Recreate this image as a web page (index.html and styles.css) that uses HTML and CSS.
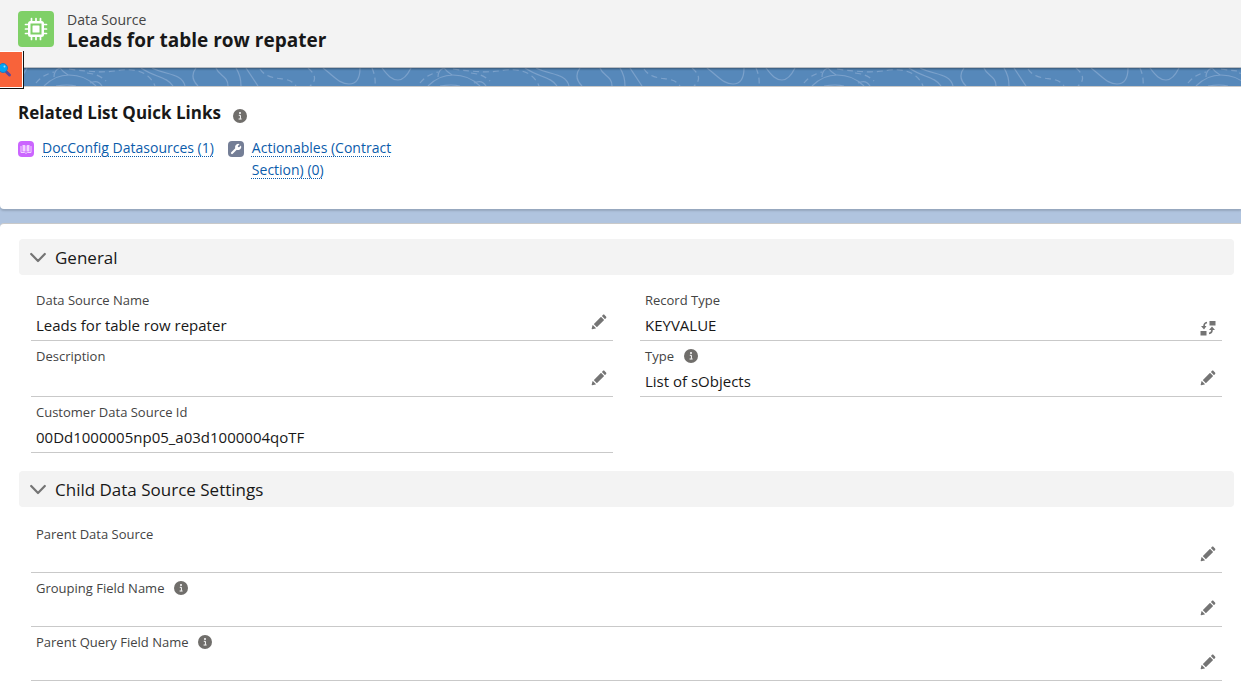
FILE: index.html
```
<!DOCTYPE html>
<html lang="en">
<head>
    <meta charset="UTF-8">
    <meta name="viewport" content="width=device-width, initial-scale=1.0">
    <title>Leads for table row repater | Data Source</title>
    <link rel="stylesheet" href="styles.css">
</head>
<body>
    <!-- Shared icons -->
    <svg class="sprite" aria-hidden="true">
        <symbol id="icon-info" viewBox="0 0 14 14">
            <circle cx="7" cy="7" r="7" fill="#706e6b"/>
            <circle cx="7" cy="4" r="1" fill="#fff"/>
            <path d="M5.8 6.3h1.6v3.500M5.600 10h3" fill="none" stroke="#fff" stroke-width="1"/>
        </symbol>
        <symbol id="icon-edit" viewBox="0 0 52 52">
            <path fill="#747474" d="M9.5 33.4l8.9 8.9c.4.4 1 .4 1.4 0L42 20c.4-.4.4-1 0-1.4l-8.8-8.8c-.4-.4-1-.4-1.4 0L9.5 32.1c-.4.4-.4 1 0 1.3zM36.1 5.7c-.4.4-.4 1 0 1.4l8.8 8.8c.4.4 1 .4 1.4 0l2.5-2.5c1.6-1.5 1.6-3.9 0-5.5l-4.7-4.7c-1.6-1.6-4.1-1.6-5.7 0l-2.3 2.5zM2.1 48.2c-.2 1 .7 1.9 1.7 1.7l10.9-2.6c.4-.1.7-.3.9-.5l.2-.2c.2-.2.3-.9-.1-1.3l-9-9c-.4-.4-1.1-.3-1.3-.1l-.2.2c-.3.3-.4.6-.5.9L2.1 48.2z"/>
        </symbol>
        <symbol id="icon-change" viewBox="0 0 16 16">
            <g fill="#747474">
                <rect x="9.5" y="1" width="6" height="4.5"/>
                <rect x=".5" y="11" width="6" height="4.5"/>
                <path d="M1 6h5.500L4 9.400zM9 10h6L12 6.600z"/>
            </g>
            <path d="M4 7V6q0-3 3-3.5M12 9v1q0 3-3 3.5" fill="none" stroke="#747474" stroke-width="1.6"/>
        </symbol>
        <symbol id="icon-chevron" viewBox="0 0 16 16">
            <path d="M1.2 5l6.8 7 6.8-7" fill="none" stroke="#747474" stroke-width="2.2" stroke-linecap="round" stroke-linejoin="round"/>
        </symbol>
    </svg>

    <header class="page-header">
        <svg class="record-icon" viewBox="0 0 36 36" aria-hidden="true">
            <rect x="10" y="10" width="16" height="16" rx="2.5" fill="#fff"/>
            <path d="M13.5 7.5v21M18 7.5v21M22.5 7.5v21M7.5 13.5h21M7.5 18h21M7.5 22.5h21" stroke="#fff" stroke-width="1.7" stroke-linecap="round"/>
            <rect x="12.5" y="12.5" width="11" height="11" fill="#7fd067"/>
            <rect x="14.5" y="14.5" width="7" height="7" rx=".6" fill="#fff"/>
        </svg>
        <div>
            <p class="record-type">Data Source</p>
            <h1>Leads for table row repater</h1>
        </div>
    </header>

    <button class="search-tab" type="button" aria-label="Search">
        <svg viewBox="0 0 14 16" aria-hidden="true">
            <path d="M6.5 10l3 3" stroke="#5b4a9c" stroke-width="3" stroke-linecap="round"/>
            <circle cx="3" cy="6" r="4.500" fill="#03a5f2" stroke="#2677c0" stroke-width="1"/>
            <circle cx="4.500" cy="4.500" r="1" fill="#9be0ff"/>
        </svg>
    </button>

    <!-- Contour line band -->
    <svg class="band" aria-hidden="true">
        <defs>
            <pattern id="contours" x="300" width="384" height="18" patternUnits="userSpaceOnUse">
                <g fill="none" stroke="#7ba1cb" stroke-width="1.2">
                    <path d="M23 0C36 10 40 16 49 16S60 8 60 0M82 0C88 8 92 12 98 12S108 6 111 0M128 18C136 10 144 7 153 7C166 7 174 12 180 18M174 15Q182 11 186 18M138 9Q138 2 144 0Q147 4 152 7M140 18Q152 16 160 18M225 0C240 10 250 8 257 18M236 0C250 7 266 5 269 18M280 0Q273 9 282 18M300 0C303 8 312 8 312 18M320 0Q325 8 325 18M330 0L342 18"/>
                    <path stroke-dasharray="6 4" d="M8 0Q20 10 10 18M72 0Q76 9 75 18M120 15Q126 7 138 4M153 1C175 4 190 5 205 2C225 0 235 8 239 18M171 5Q183 6 190 13M344 1C350 10 360 10 367 11S377 14 380 18"/>
                </g>
            </pattern>
        </defs>
        <rect width="100%" height="18" fill="url(#contours)"/>
    </svg>

    <main>
        <section class="card quick-links">
            <div class="card-title">
                <h2>Related List Quick Links</h2>
                <svg class="info"><use href="#icon-info"/></svg>
            </div>
            <ul class="link-list">
                <li>
                    <svg class="link-icon purple" viewBox="0 0 16 16" aria-hidden="true">
                        <path d="M3 5v6.5h3.5q1 0 1.5 1 .5-1 1.5-1H13V5" fill="none" stroke="#f2d5ff" stroke-width="1"/>
                        <path d="M4.5 4h2q1 0 1 1v5.5h-3zM8.5 5q0-1 1-1h2v6.5h-3z" fill="#f2d5ff"/>
                    </svg>
                    <a href="#">DocConfig Datasources (1)</a>
                </li>
                <li>
                    <svg class="link-icon slate" viewBox="0 0 16 16" aria-hidden="true">
                        <path d="M4 12l5-5" stroke="#fff" stroke-width="2.2" stroke-linecap="round"/>
                        <path d="M11.6 3.2L9.8 5l.2 1.1 1.100.2 1.800-1.800A3.100 3.100 0 1 1 11.600 3.200z" fill="#fff"/>
                    </svg>
                    <a href="#">Actionables (Contract Section) (0)</a>
                </li>
            </ul>
        </section>

        <section class="card details">
            <h3><button class="section-toggle" type="button" aria-expanded="true">
                <svg><use href="#icon-chevron"/></svg>General
            </button></h3>
            <div class="fields two-columns">
                <div class="field">
                    <div class="label">Data Source Name</div>
                    <div class="value">Leads for table row repater</div>
                    <button class="edit" type="button" aria-label="Edit Data Source Name"><svg><use href="#icon-edit"/></svg></button>
                </div>
                <div class="field">
                    <div class="label">Record Type</div>
                    <div class="value">KEYVALUE</div>
                    <button class="edit change" type="button" aria-label="Change Record Type"><svg><use href="#icon-change"/></svg></button>
                </div>
                <div class="field">
                    <div class="label">Description</div>
                    <div class="value"></div>
                    <button class="edit" type="button" aria-label="Edit Description"><svg><use href="#icon-edit"/></svg></button>
                </div>
                <div class="field">
                    <div class="label">Type <svg class="info"><use href="#icon-info"/></svg></div>
                    <div class="value">List of sObjects</div>
                    <button class="edit" type="button" aria-label="Edit Type"><svg><use href="#icon-edit"/></svg></button>
                </div>
                <div class="field">
                    <div class="label">Customer Data Source Id</div>
                    <div class="value">00Dd1000005np05_a03d1000004qoTF</div>
                </div>
            </div>

            <h3><button class="section-toggle" type="button" aria-expanded="true">
                <svg><use href="#icon-chevron"/></svg>Child Data Source Settings
            </button></h3>
            <div class="fields compact">
                <div class="field">
                    <div class="label">Parent Data Source</div>
                    <div class="value"></div>
                    <button class="edit" type="button" aria-label="Edit Parent Data Source"><svg><use href="#icon-edit"/></svg></button>
                </div>
                <div class="field">
                    <div class="label">Grouping Field Name <svg class="info"><use href="#icon-info"/></svg></div>
                    <div class="value"></div>
                    <button class="edit" type="button" aria-label="Edit Grouping Field Name"><svg><use href="#icon-edit"/></svg></button>
                </div>
                <div class="field">
                    <div class="label">Parent Query Field Name <svg class="info"><use href="#icon-info"/></svg></div>
                    <div class="value"></div>
                    <button class="edit" type="button" aria-label="Edit Parent Query Field Name"><svg><use href="#icon-edit"/></svg></button>
                </div>
            </div>
        </section>
    </main>
</body>
</html>
```
FILE: styles.css
```
* {
    box-sizing: border-box;
}

body {
    margin: 0;
    font-family: 'Segoe UI', 'Open Sans', 'Noto Sans', sans-serif;
    font-size: 15px;
    line-height: 22px;
    color: #181818;
    background-color: #b0c4df;
}

h1, h2, h3, p, ul {
    margin: 0;
    padding: 0;
}

button {
    font-family: inherit;
    color: inherit;
    border: none;
    padding: 0;
    cursor: pointer;
}

.sprite {
    display: none;
}

/* Header */
.page-header {
    position: relative;
    display: flex;
    gap: 13px;
    height: 68px;
    padding: 11px 18px;
    background-color: #f3f3f3;
    border-bottom: 1px solid #b8bcc2;
    box-shadow: 0 1px 2px rgba(0,0,0,0.4);
}

.record-icon {
    width: 36px;
    height: 36px;
    border-radius: 4px;
    background-color: #7fd067;
}

.record-type {
    font-size: 14px;
    line-height: 18px;
    color: #444;
}

h1 {
    font-size: 19px;
    line-height: 22px;
}

.search-tab {
    position: absolute;
    top: 51px;
    left: 0;
    z-index: 1;
    width: 24px;
    height: 38px;
    background-color: #f8633a;
    border-right: 1px solid #111;
    border-bottom: 1px solid #111;
    box-shadow: inset -1px -1px 0 #fff, inset 0 1px 0 #fff;
}

.search-tab svg {
    display: block;
    width: 14px;
    height: 16px;
}

.band {
    display: block;
    width: 100%;
    height: 18px;
    background-color: #5688ba;
}

/* Cards */
.card {
    background-color: #fff;
    border-top: 1px solid #c9c9c9;
    border-radius: 4px 0 0 4px;
    box-shadow: 0 2px 2px rgba(0,0,0,0.15);
}

.quick-links {
    min-height: 123px;
    padding: 15px 18px;
    margin-bottom: 14px;
    border-top-left-radius: 0;
}

.card-title {
    display: flex;
    align-items: center;
    gap: 12px;
    margin-bottom: 13px;
}

h2 {
    font-size: 17px;
    line-height: 22px;
}

.info {
    width: 14px;
    height: 14px;
    flex: none;
}

.card-title .info {
    margin-top: 5px;
}

.link-list {
    display: flex;
    gap: 14px;
    font-size: 14px;
    list-style: none;
}

.link-list li {
    display: flex;
    gap: 8px;
    max-width: 196px;
}

.link-icon {
    flex: none;
    width: 16px;
    height: 16px;
    margin-top: 4px;
    border-radius: 4px;
}

.purple {
    background-color: #cb65ff;
}

.slate {
    background-color: #747e96;
}

a {
    color: #0b5cab;
    text-decoration: underline dotted 1px;
    text-underline-offset: 3px;
}

/* Record details */
.details {
    padding: 15px 7px 10px 19px;
}

h3 {
    font-weight: normal;
}

.section-toggle {
    display: flex;
    align-items: center;
    gap: 9px;
    width: 100%;
    height: 36px;
    padding: 0 11px;
    font-size: 17px;
    border-radius: 4px;
    background-color: #f3f3f3;
}

.section-toggle svg {
    width: 16px;
    height: 16px;
}

.fields {
    display: grid;
    padding: 10px 12px 18px;
}

.two-columns {
    grid-template-columns: 1fr 1fr;
    column-gap: 27px;
}

.field {
    position: relative;
    height: 56px;
    padding: 5px;
    border-bottom: 1px solid #c9c9c9;
}

.compact {
    padding-top: 12px;
}

.compact .field {
    height: 54px;
}

.label {
    display: flex;
    align-items: center;
    gap: 10px;
    font-size: 13px;
    line-height: 20px;
    color: #444;
}

.value {
    margin-top: 4px;
}

.edit {
    position: absolute;
    right: 6px;
    bottom: 10px;
    width: 16px;
    height: 16px;
    background: none;
}

.edit svg {
    display: block;
    width: 16px;
    height: 16px;
}

.change {
    bottom: 4px;
}
```
